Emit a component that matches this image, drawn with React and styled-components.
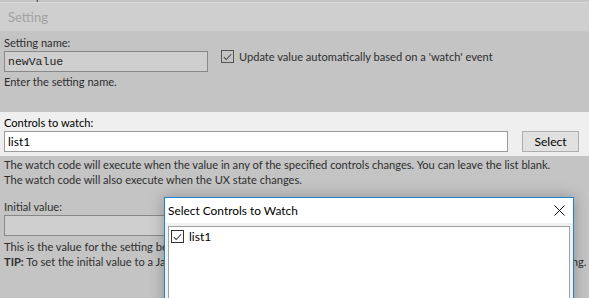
import styled, { createGlobalStyle } from "styled-components";

const GlobalStyle = createGlobalStyle`
  html, body {
    margin: 0;
    padding: 0;
    background: #c4c4c4;
    overflow: hidden;
  }
  body {
    font-family: Lato, "Liberation Sans", sans-serif;
    font-size: 11.1px;
    color: #2e2e2e;
  }
`;

const Check = ({ dark }) => (
  <CheckBox $dark={dark}>
    <svg width="12" height="12" viewBox="0 0 12 12">
      <path d="M2 6.2 L4.6 8.8 L10 3" fill="none" stroke={dark ? "#333" : "#444"} strokeWidth="1.1" />
    </svg>
  </CheckBox>
);

const App = () => {
  return (
    <>
      <GlobalStyle />
      <Page>
        <TopClip>
          <span>Description/notes:</span>
        </TopClip>
        <Header>Setting</Header>
        <Section>
          <Row>
            <Field>
              <Label>Setting name:</Label>
              <Input $width={204} $mono>newValue</Input>
              <Hint>Enter the setting name.</Hint>
            </Field>
            <CheckRow>
              <Check />
              <span>Update value automatically based on a 'watch' event</span>
            </CheckRow>
          </Row>
        </Section>
        <Focus>
          <Label $dark>Controls to watch:</Label>
          <InputRow>
            <Input $width={504} $white>list1</Input>
            <Button>Select</Button>
          </InputRow>
        </Focus>
        <Help>
          <div>The watch code will execute when the value in any of the specified controls changes. You can leave the list blank.</div>
          <div>The watch code will also execute when the UX state changes.</div>
        </Help>
        <Section $top={12}>
          <Label>Initial value:</Label>
          <Input $width={560} />
          <Help $flush>
            <div>This is the value for the setting before any watch event has been run.</div>
            <div>
              <b>TIP:</b> To set the initial value to a JavaScript expression, leave this blank and then assign it in the watch code of the setting.
            </div>
          </Help>
        </Section>
      </Page>
      <Dialog>
        <TitleBar>
          <span>Select Controls to Watch</span>
          <Close>
            <svg width="11" height="11" viewBox="0 0 11 11">
              <path d="M0.5 0.5 L10.5 10.5 M10.5 0.5 L0.5 10.5" stroke="#111" strokeWidth="1" />
            </svg>
          </Close>
        </TitleBar>
        <DialogBody>
          <ListBox>
            <ListItem>
              <Check dark />
              <span>list1</span>
            </ListItem>
          </ListBox>
        </DialogBody>
      </Dialog>
    </>
  );
};

export default App;

const Page = styled.div`
  display: flex;
  flex-direction: column;
  width: 589px;
  height: 298px;
  overflow: hidden;
`;

const TopClip = styled.div`
  height: 2px;
  overflow: hidden;
  padding-left: 5px;
  color: #3a3a3a;
  span {
    display: block;
    margin-top: -12px;
    line-height: 15px;
  }
`;

const Header = styled.div`
  height: 28px;
  border-top: 1px solid #d9d9d9;
  background: #cfcfcf;
  color: #a2a2a2;
  font-size: 13px;
  line-height: 28px;
  padding-left: 8px;
`;

const Section = styled.div`
  padding: ${(p) => p.$top || 4}px 4px 0 4px;
`;

const Row = styled.div`
  display: flex;
  align-items: flex-start;
  gap: 13px;
`;

const Field = styled.div`
  display: flex;
  flex-direction: column;
`;

const Label = styled.div`
  line-height: 15px;
  color: ${(p) => (p.$dark ? "#000" : "#2e2e2e")};
`;

const Input = styled.div`
  box-sizing: border-box;
  width: ${(p) => p.$width}px;
  height: 21px;
  margin-top: 1px;
  border: 1px solid ${(p) => (p.$white ? "#9a9a9a" : "#888")};
  background: ${(p) => (p.$white ? "#fff" : "#cfcfcf")};
  padding: 0 3px;
  line-height: 19px;
  color: ${(p) => (p.$white ? "#000" : "#1e1e1e")};
  font-family: ${(p) => (p.$mono ? `"Liberation Mono", monospace` : "inherit")};
  font-size: ${(p) => (p.$mono ? "11.5px" : "12px")};
`;

const Hint = styled.div`
  margin-top: 2px;
  line-height: 15px;
`;

const CheckRow = styled.div`
  display: flex;
  align-items: center;
  gap: 5px;
  margin-top: 15px;
`;

const CheckBox = styled.span`
  box-sizing: border-box;
  width: 13px;
  height: 13px;
  border: 1px solid ${(p) => (p.$dark ? "#333" : "#555")};
  display: inline-flex;
  align-items: center;
  justify-content: center;
  flex: none;
`;

const Focus = styled.div`
  margin-top: 23px;
  background: #efefef;
  padding: 3px 4px 4px 4px;
`;

const InputRow = styled.div`
  display: flex;
  align-items: center;
  gap: 14px;
`;

const Button = styled.button`
  box-sizing: border-box;
  width: 57px;
  height: 21px;
  margin-top: 1px;
  border: 1px solid #adadad;
  background: #e1e1e1;
  font: inherit;
  font-size: 12px;
  color: #000;
  padding: 0;
`;

const Help = styled.div`
  padding: ${(p) => (p.$flush ? "3px 0 0 0" : "1px 4px 0 4px")};
  line-height: 15px;
  white-space: nowrap;
  b {
    font-weight: 700;
  }
`;

const Dialog = styled.div`
  position: absolute;
  left: 164px;
  top: 197px;
  width: 410px;
  height: 200px;
  box-sizing: border-box;
  border: 1px solid #1883d7;
  background: #f0f0f0;
  box-shadow: 0 0 14px rgba(0, 0, 0, 0.28);
  display: flex;
  flex-direction: column;
`;

const TitleBar = styled.div`
  height: 25px;
  background: #fff;
  display: flex;
  align-items: center;
  justify-content: space-between;
  padding: 0 8px 0 3px;
  color: #000;
  font-size: 11.9px;
`;

const Close = styled.span`
  display: inline-flex;
  width: 11px;
  height: 11px;
`;

const DialogBody = styled.div`
  flex: 1;
  padding: 3px 3px 0 3px;
  display: flex;
`;

const ListBox = styled.div`
  flex: 1;
  background: #fff;
  border: 1px solid #a0a0a0;
  padding: 2px 2px;
`;

const ListItem = styled.div`
  display: flex;
  align-items: center;
  gap: 5px;
  color: #000;
  font-size: 12px;
  line-height: 15px;
`;
